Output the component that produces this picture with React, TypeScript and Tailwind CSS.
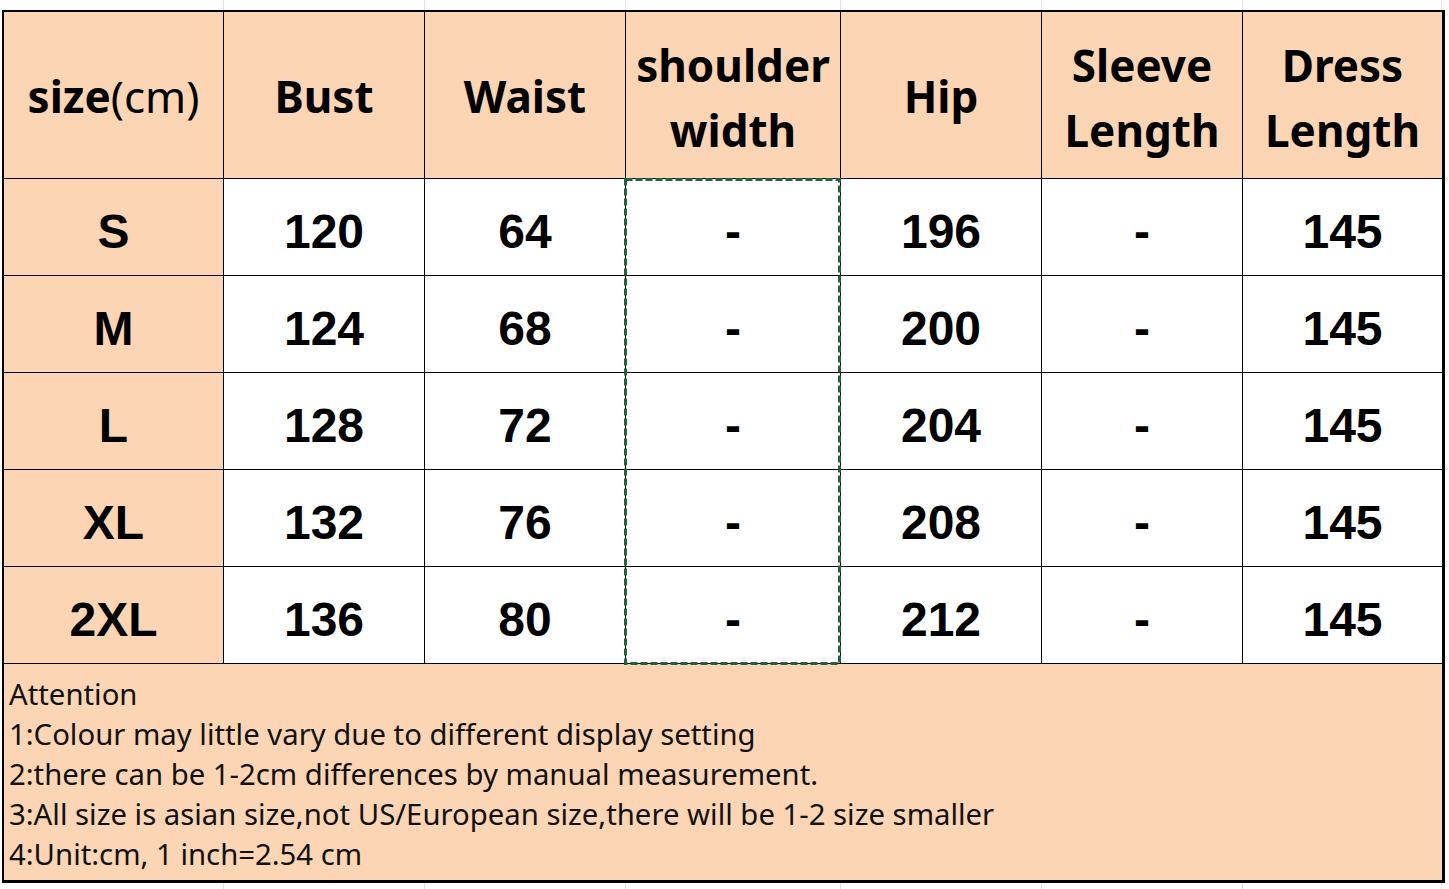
import React from "react";

const GRID = "grid grid-cols-[220px_201px_201px_215px_201px_201px_199px]";
const HEAD = "font-['Noto_Sans',sans-serif] font-bold text-[44px] text-black";
const NUM = "font-['Liberation_Sans',Arial,sans-serif] font-bold text-[48px] text-black";

const headers: React.ReactNode[] = [
  <span key="s" className="pt-[2px] block">
    <span className="font-bold">size</span>
    <span className="font-normal">(cm)</span>
  </span>,
  <span key="b" className="pt-[2px] block">Bust</span>,
  <span key="w" className="pt-[2px] block">Waist</span>,
  <span key="sw" className="leading-[65px] block pt-[6px]">shoulder<br />width</span>,
  <span key="h" className="pt-[2px] block">Hip</span>,
  <span key="sl" className="leading-[65px] block pt-[6px]">Sleeve<br />Length</span>,
  <span key="dl" className="leading-[65px] block pt-[6px]">Dress<br />Length</span>,
];

const rows: string[][] = [
  ["S", "120", "64", "-", "196", "-", "145"],
  ["M", "124", "68", "-", "200", "-", "145"],
  ["L", "128", "72", "-", "204", "-", "145"],
  ["XL", "132", "76", "-", "208", "-", "145"],
  ["2XL", "136", "80", "-", "212", "-", "145"],
];

const notes = [
  "Attention",
  "1:Colour may little vary due to different display setting",
  "2:there can be 1-2cm differences by manual measurement.",
  "3:All size is asian size,not US/European size,there will be 1-2 size smaller",
  "4:Unit:cm, 1 inch=2.54 cm",
];

function GridStrip({ h }: { h: string }) {
  return (
    <div className={`${GRID} ${h} ml-[4px]`}>
      {Array.from({ length: 7 }).map((_, i) => (
        <div key={i} className="border-r border-[#e2e2e2]" />
      ))}
    </div>
  );
}

export default function App() {
  return (
    <div className="w-[1449px] h-[889px] bg-white overflow-hidden">
      <GridStrip h="h-[10px]" />
      <div className="relative ml-[2px] w-[1443px] border-t-2 border-l-2 border-r-[3px] border-b-[3px] border-black">
        <div className={GRID}>
          {headers.map((h, i) => (
            <div
              key={i}
              className={`h-[167px] bg-[#fcd5b4] border-b border-black ${i < 6 ? "border-r" : ""} flex items-center justify-center text-center whitespace-nowrap ${HEAD}`}
            >
              {h}
            </div>
          ))}
          {rows.map((r, ri) =>
            r.map((c, ci) => (
              <div
                key={`${ri}-${ci}`}
                className={`h-[97px] border-b border-black ${ci < 6 ? "border-r" : ""} ${ci === 0 ? "bg-[#fcd5b4]" : "bg-white"} flex items-center justify-center pt-[9px] ${NUM}`}
              >
                {c}
              </div>
            ))
          )}
        </div>
        <div className="h-[216px] bg-[#fcd5b4] pl-[5px] pt-[10px] font-['Noto_Sans',sans-serif] text-[29.3px] leading-[40px] text-[#111]">
          {notes.map((n) => (
            <div key={n} className="whitespace-nowrap">{n}</div>
          ))}
        </div>
        <svg
          className="absolute left-[620px] top-[166px] pointer-events-none z-10"
          width="217"
          height="487"
        >
          <rect
            x="1.5"
            y="1.5"
            width="214"
            height="484"
            fill="none"
            stroke="#24613f"
            strokeWidth="3"
            strokeDasharray="7 3"
          />
        </svg>
      </div>
      <GridStrip h="h-[6px]" />
    </div>
  );
}
